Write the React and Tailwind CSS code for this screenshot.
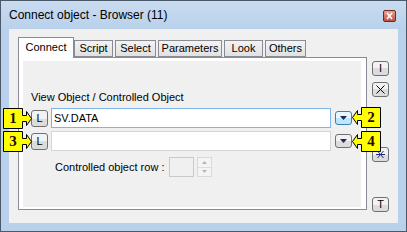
import React from 'react';

const ui = "font-['Liberation_Sans',Arial,sans-serif]";

const tabs = [
    { label: 'Connect', w: 'w-[56px]', active: true },
    { label: 'Script', w: 'w-[39px]' },
    { label: 'Select', w: 'w-[41px]' },
    { label: 'Parameters', w: 'w-[64px]' },
    { label: 'Look', w: 'w-[39px]' },
    { label: 'Others', w: 'w-[41px]' },
];

const SmallButton = ({ children, className = '' }) => (
    <div
        className={`w-[17px] h-[15px] flex items-center justify-center rounded-[3px] border border-[#707070] bg-gradient-to-b from-[#f2f2f2] from-50% to-[#dcdcdc] to-50% text-[11px] leading-none text-black ${className}`}
    >
        {children}
    </div>
);

const DropButton = ({ hot }) => (
    <div
        className={`w-[17px] h-[14px] flex items-center justify-center rounded-[3px] border ${
            hot
                ? 'border-[#3c7fb1] bg-gradient-to-b from-[#eaf6fd] from-50% to-[#bee6fd] to-50%'
                : 'border-[#707070] bg-gradient-to-b from-[#f2f2f2] from-50% to-[#dcdcdc] to-50%'
        }`}
    >
        <svg width="7" height="4" viewBox="0 0 7 4">
            <path d="M0 0h7L3.5 4z" fill="#1c2a5a" />
        </svg>
    </div>
);

// yellow numbered marker with an arrow, drawn over the dialog
const Callout = ({ n, dir, className }) => {
    const right = dir === 'right';
    return (
        <div className={`absolute ${className} w-[29px] h-[21px]`}>
            <svg width="29" height="21" viewBox="0 0 29 21" className="absolute inset-0">
                {right ? (
                    <path
                        d="M0.5 0.5h19v7h4v-4l5 7-5 7v-4h-4v7h-19z"
                        fill="#ffff00"
                        stroke="#000"
                    />
                ) : (
                    <path
                        d="M28.5 0.5h-19v7h-4v-4l-5 7 5 7v-4h4v7h19z"
                        fill="#ffff00"
                        stroke="#000"
                    />
                )}
            </svg>
            <span
                className={`absolute top-0 ${right ? 'left-0' : 'left-[9px]'} w-[20px] h-[21px] flex items-center justify-center font-['Liberation_Serif',serif] font-bold text-[15px] leading-none text-[#2a0a00]`}
            >
                {n}
            </span>
        </div>
    );
};

export default function App() {
    return (
        <div className={`relative w-[407px] h-[232px] border border-[#4b5a6b] bg-[#b9d1ea] ${ui}`}>
            {/* title bar */}
            <div className="h-[28px] flex items-center justify-between pl-[8px] pr-[10px] bg-gradient-to-b from-[#c9dcf1] to-[#b9d1ea]">
                <span className="text-[12px] text-black">Connect object - Browser (11)</span>
                <svg width="13" height="12" viewBox="0 0 13 12" className="mt-[2px]">
                    <defs>
                        <linearGradient id="cl" x1="0" y1="0" x2="0" y2="1">
                            <stop offset="0" stopColor="#eaa89a" />
                            <stop offset="1" stopColor="#c24a3a" />
                        </linearGradient>
                    </defs>
                    <rect x="0.5" y="0.5" width="12" height="11" rx="1.5" fill="url(#cl)" stroke="#6b2a20" />
                    <path d="M4 3l5 6M9 3l-5 6" stroke="#fff" strokeWidth="1.6" />
                </svg>
            </div>

            {/* client area */}
            <div className="mx-[8px] h-[194px] bg-[#f0f0f0] flex">
                <div className="pl-[9px] pt-[8px]">
                    <div className="flex items-end h-[20px]">
                        {tabs.map((t, i) => (
                            <div
                                key={t.label}
                                className={`${t.w} ${
                                    t.active
                                        ? 'h-[21px] -mb-px relative z-10 bg-white border-b-0 pb-[2px]'
                                        : 'h-[17px] bg-gradient-to-b from-[#f3f3f3] to-[#e1e1e1]'
                                } ${i > 1 ? 'ml-[2px]' : ''} border border-[#898c95] flex items-center justify-center text-[11px] text-black`}
                            >
                                {t.label}
                            </div>
                        ))}
                    </div>
                    <div className="w-[349px] h-[153px] border border-[#898c95] bg-white pl-[4px] pt-[3px] pr-[5px] pb-[2px]">
                        <div className="h-full bg-[#f0f0f0] text-[11px] text-black">
                            <div className="pl-[8px] pt-[30px] leading-[13px]">View Object / Controlled Object</div>
                            <div className="mt-[4px] pl-[8px] flex items-center h-[20px]">
                                <SmallButton className="h-[17px]">L</SmallButton>
                                <div className="ml-[3px] w-[280px] h-[20px] border border-[#7eb4ea] bg-white flex items-center pl-[2px]">
                                    SV.DATA
                                </div>
                                <div className="ml-[4px]">
                                    <DropButton hot />
                                </div>
                            </div>
                            <div className="mt-[3px] pl-[8px] flex items-center h-[20px]">
                                <SmallButton className="h-[17px]">L</SmallButton>
                                <div className="ml-[3px] w-[280px] h-[20px] border border-[#d5d5d5] bg-white" />
                                <div className="ml-[4px]">
                                    <DropButton />
                                </div>
                            </div>
                            <div className="mt-[6px] pl-[32px] flex items-center h-[20px]">
                                <span className="w-[114px] text-[11px]">Controlled object row :</span>
                                <div className="w-[25px] h-[20px] border border-[#c9c9c9] bg-[#f0f0f0]" />
                                <div className="ml-[3px] w-[15px] h-[20px] flex flex-col border border-[#d9d9d9] bg-[#f4f4f4]">
                                    <div className="flex-1 flex items-center justify-center border-b border-[#dcdcdc]">
                                        <svg width="5" height="3" viewBox="0 0 5 3">
                                            <path d="M0 3h5L2.5 0z" fill="#b5b5b5" />
                                        </svg>
                                    </div>
                                    <div className="flex-1 flex items-center justify-center">
                                        <svg width="5" height="3" viewBox="0 0 5 3">
                                            <path d="M0 0h5L2.5 3z" fill="#b5b5b5" />
                                        </svg>
                                    </div>
                                </div>
                            </div>
                        </div>
                    </div>
                </div>

                {/* right-side buttons */}
                <div className="ml-[5px] pt-[32px] flex flex-col">
                    <SmallButton>I</SmallButton>
                    <SmallButton className="mt-[6px]">
                        <svg width="9" height="9" viewBox="0 0 9 9">
                            <path d="M0.5 0.5l8 8M8.5 0.5l-8 8" stroke="#000" />
                        </svg>
                    </SmallButton>
                    <SmallButton className="mt-[50px]">
                        <svg width="9" height="7" viewBox="0 0 9 7">
                            <path d="M0 3.5h9M1.5 0l6 7M7.5 0l-6 7" stroke="#1e2a78" />
                        </svg>
                    </SmallButton>
                    <SmallButton className="mt-[35px]">T</SmallButton>
                </div>
            </div>

            <Callout n="1" dir="right" className="left-[2px] top-[107px]" />
            <Callout n="3" dir="right" className="left-[2px] top-[130px]" />
            <Callout n="2" dir="left" className="left-[351px] top-[106px]" />
            <Callout n="4" dir="left" className="left-[351px] top-[130px]" />
        </div>
    );
}
